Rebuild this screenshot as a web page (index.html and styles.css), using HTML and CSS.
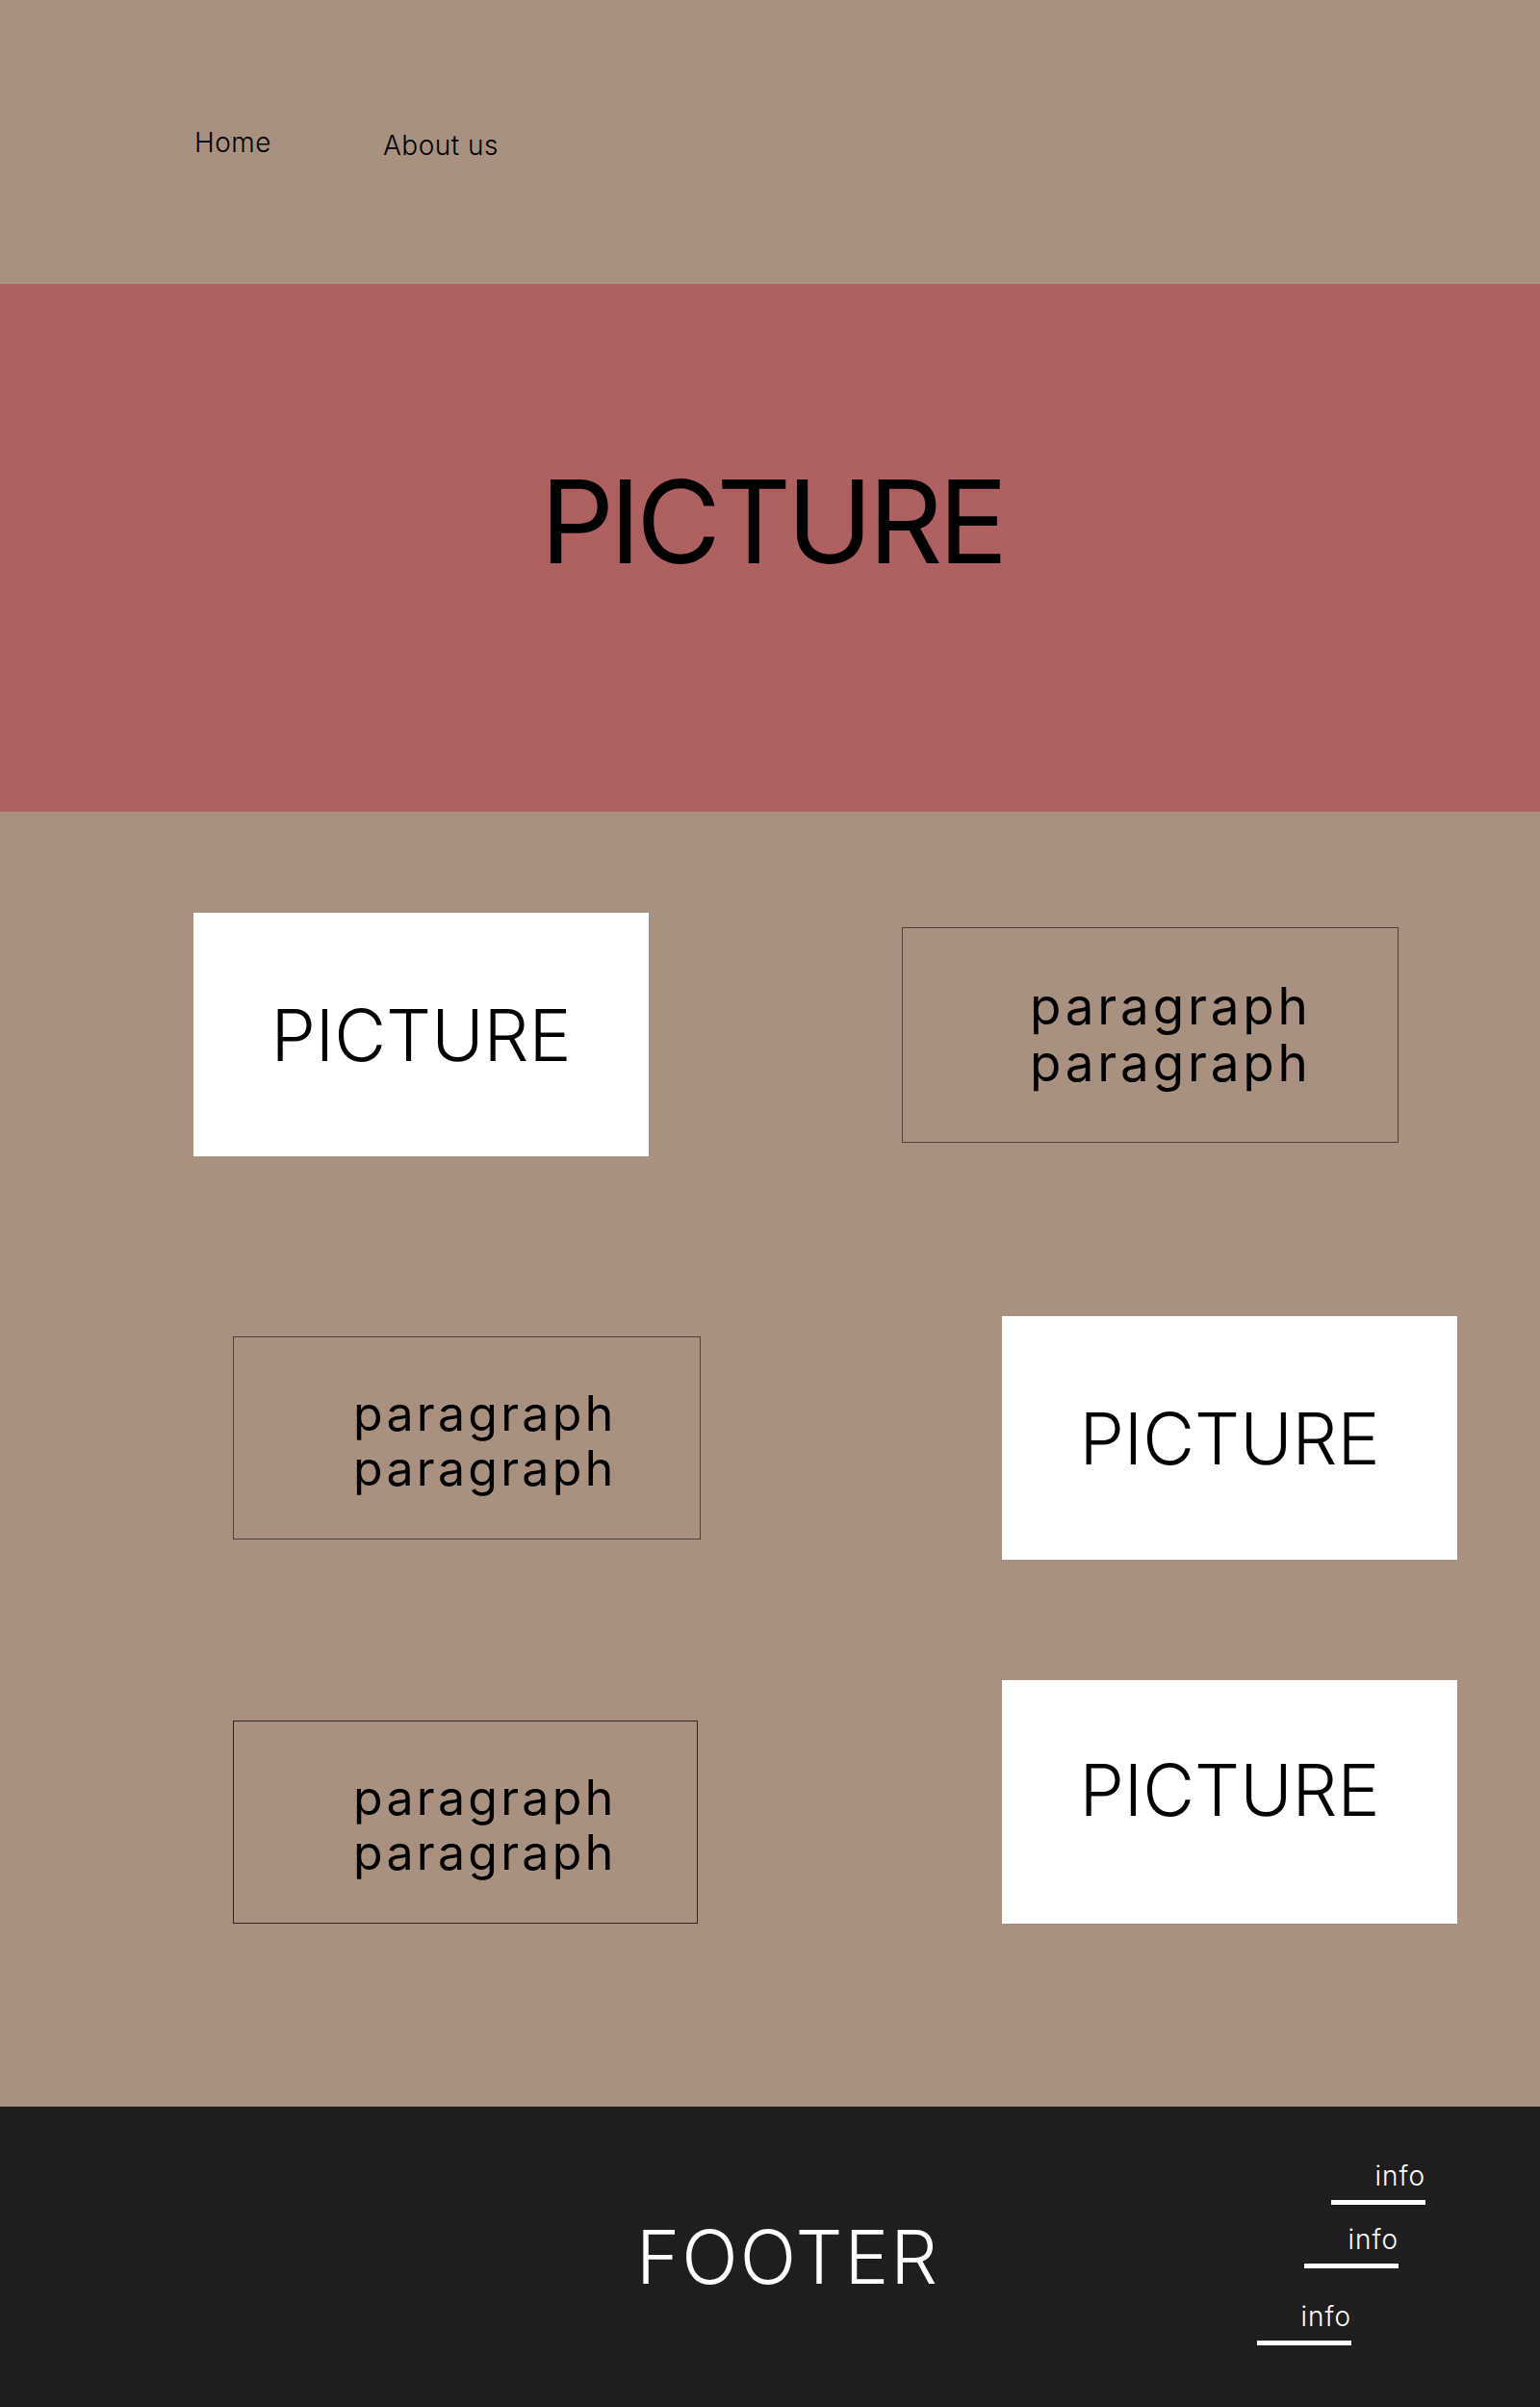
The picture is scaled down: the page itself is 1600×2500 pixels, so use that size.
FILE: index.html
```html
<!DOCTYPE html>
<html lang="en">
<head>
    <meta charset="UTF-8">
    <meta name="viewport" content="width=device-width, initial-scale=1.0">
    <title>Home</title>
    <link rel="stylesheet" href="styles.css">
</head>
<body>
    <header class="site-header">
        <nav class="nav">
            <a class="nav-link" href="#">Home</a>
            <a class="nav-link nav-link--low" href="#">About us</a>
        </nav>
    </header>

    <section class="hero">
        <h1 class="hero-title">PICTURE</h1>
    </section>

    <main class="content">
        <div class="row row--first">
            <div class="picture picture--first">PICTURE</div>
            <div class="text-box text-box--wide">
                <p>paragraph<br>paragraph</p>
            </div>
        </div>
        <div class="row row--second">
            <div class="text-box text-box--left">
                <p>paragraph<br>paragraph</p>
            </div>
            <div class="picture picture--right">PICTURE</div>
        </div>
        <div class="row row--third">
            <div class="text-box text-box--left text-box--dark">
                <p>paragraph<br>paragraph</p>
            </div>
            <div class="picture picture--right picture--raised">PICTURE</div>
        </div>
    </main>

    <footer class="site-footer">
        <div class="footer-title">FOOTER</div>
        <ul class="info-list">
            <li class="info-item">info</li>
            <li class="info-item info-item--second">info</li>
            <li class="info-item info-item--third">info</li>
        </ul>
    </footer>
</body>
</html>
```

FILE: styles.css
```css
body {
    margin: 0;
    padding: 0;
    font-family: Inter, "Noto Sans", sans-serif;
    background: #a89180;
    color: #000;
}

/* header */
.site-header {
    height: 295px;
    box-sizing: border-box;
    padding: 134px 0 0 202px;
}
.nav {
    display: flex;
    align-items: flex-start;
    gap: 116px;
}
.nav-link {
    font-size: 28px;
    font-weight: 300;
    line-height: 28px;
    letter-spacing: 0.5px;
    color: #000;
    text-decoration: none;
}
.nav-link--low {
    padding-top: 3px;
}

/* hero */
.hero {
    height: 548px;
    box-sizing: border-box;
    padding-bottom: 54px;
    background: #af6161;
    display: flex;
    justify-content: center;
    align-items: center;
}
.hero-title {
    margin: 0;
    padding-left: 4px;
    font-size: 120px;
    font-weight: 400;
    line-height: 1;
    letter-spacing: -4.5px;
}

/* content */
.content {
    padding: 105px 0 190px;
}
.row {
    display: flex;
    align-items: center;
}
.row--second {
    margin-top: 166px;
}
.row--third {
    margin-top: 125px;
    align-items: flex-end;
}

.picture {
    width: 473px;
    height: 253px;
    box-sizing: border-box;
    background: #fff;
    display: flex;
    justify-content: center;
    align-items: center;
    font-size: 74px;
    font-weight: 300;
    line-height: 1;
}
.picture--first {
    margin-left: 201px;
}
.picture--right {
    margin-left: auto;
    margin-right: 86px;
}
.picture--raised {
    padding-bottom: 26px;
}

.text-box {
    box-sizing: border-box;
    border: 1px solid #4a423c;
    display: flex;
    align-items: center;
}
.text-box p {
    margin: 0;
    font-size: 50px;
    font-weight: 400;
    line-height: 57px;
    letter-spacing: 3.3px;
}
.text-box--wide {
    width: 516px;
    height: 224px;
    margin-left: 263px;
    padding-left: 132px;
}
.text-box--wide p {
    font-size: 53px;
    line-height: 59px;
    letter-spacing: 3.8px;
}
.text-box--left {
    width: 486px;
    height: 211px;
    margin-left: 242px;
    padding: 6px 0 0 124px;
}
.text-box--dark {
    width: 483px;
    border-color: #2b2624;
    padding-top: 6px;
}

/* footer */
.site-footer {
    height: 312px;
    box-sizing: border-box;
    background: #201d1e;
    color: #fff;
    display: flex;
    align-items: flex-start;
    padding-left: 661px;
}
.footer-title {
    margin-top: 118px;
    font-size: 77px;
    font-weight: 300;
    line-height: 1;
    letter-spacing: 2px;
}
.info-list {
    list-style: none;
    margin: 0 119px 0 auto;
    padding: 57px 0 0;
    display: flex;
    flex-direction: column;
    align-items: flex-end;
}
.info-item {
    width: 98px;
    text-align: right;
    font-size: 28px;
    font-weight: 300;
    line-height: 30px;
    letter-spacing: 1px;
}
.info-item::after {
    content: "";
    display: block;
    width: 98px;
    height: 5px;
    margin-top: 10px;
    background: #fff;
}
.info-item--second {
    margin-top: 21px;
    margin-right: 28px;
}
.info-item--third {
    margin-top: 35px;
    margin-right: 77px;
}
```
